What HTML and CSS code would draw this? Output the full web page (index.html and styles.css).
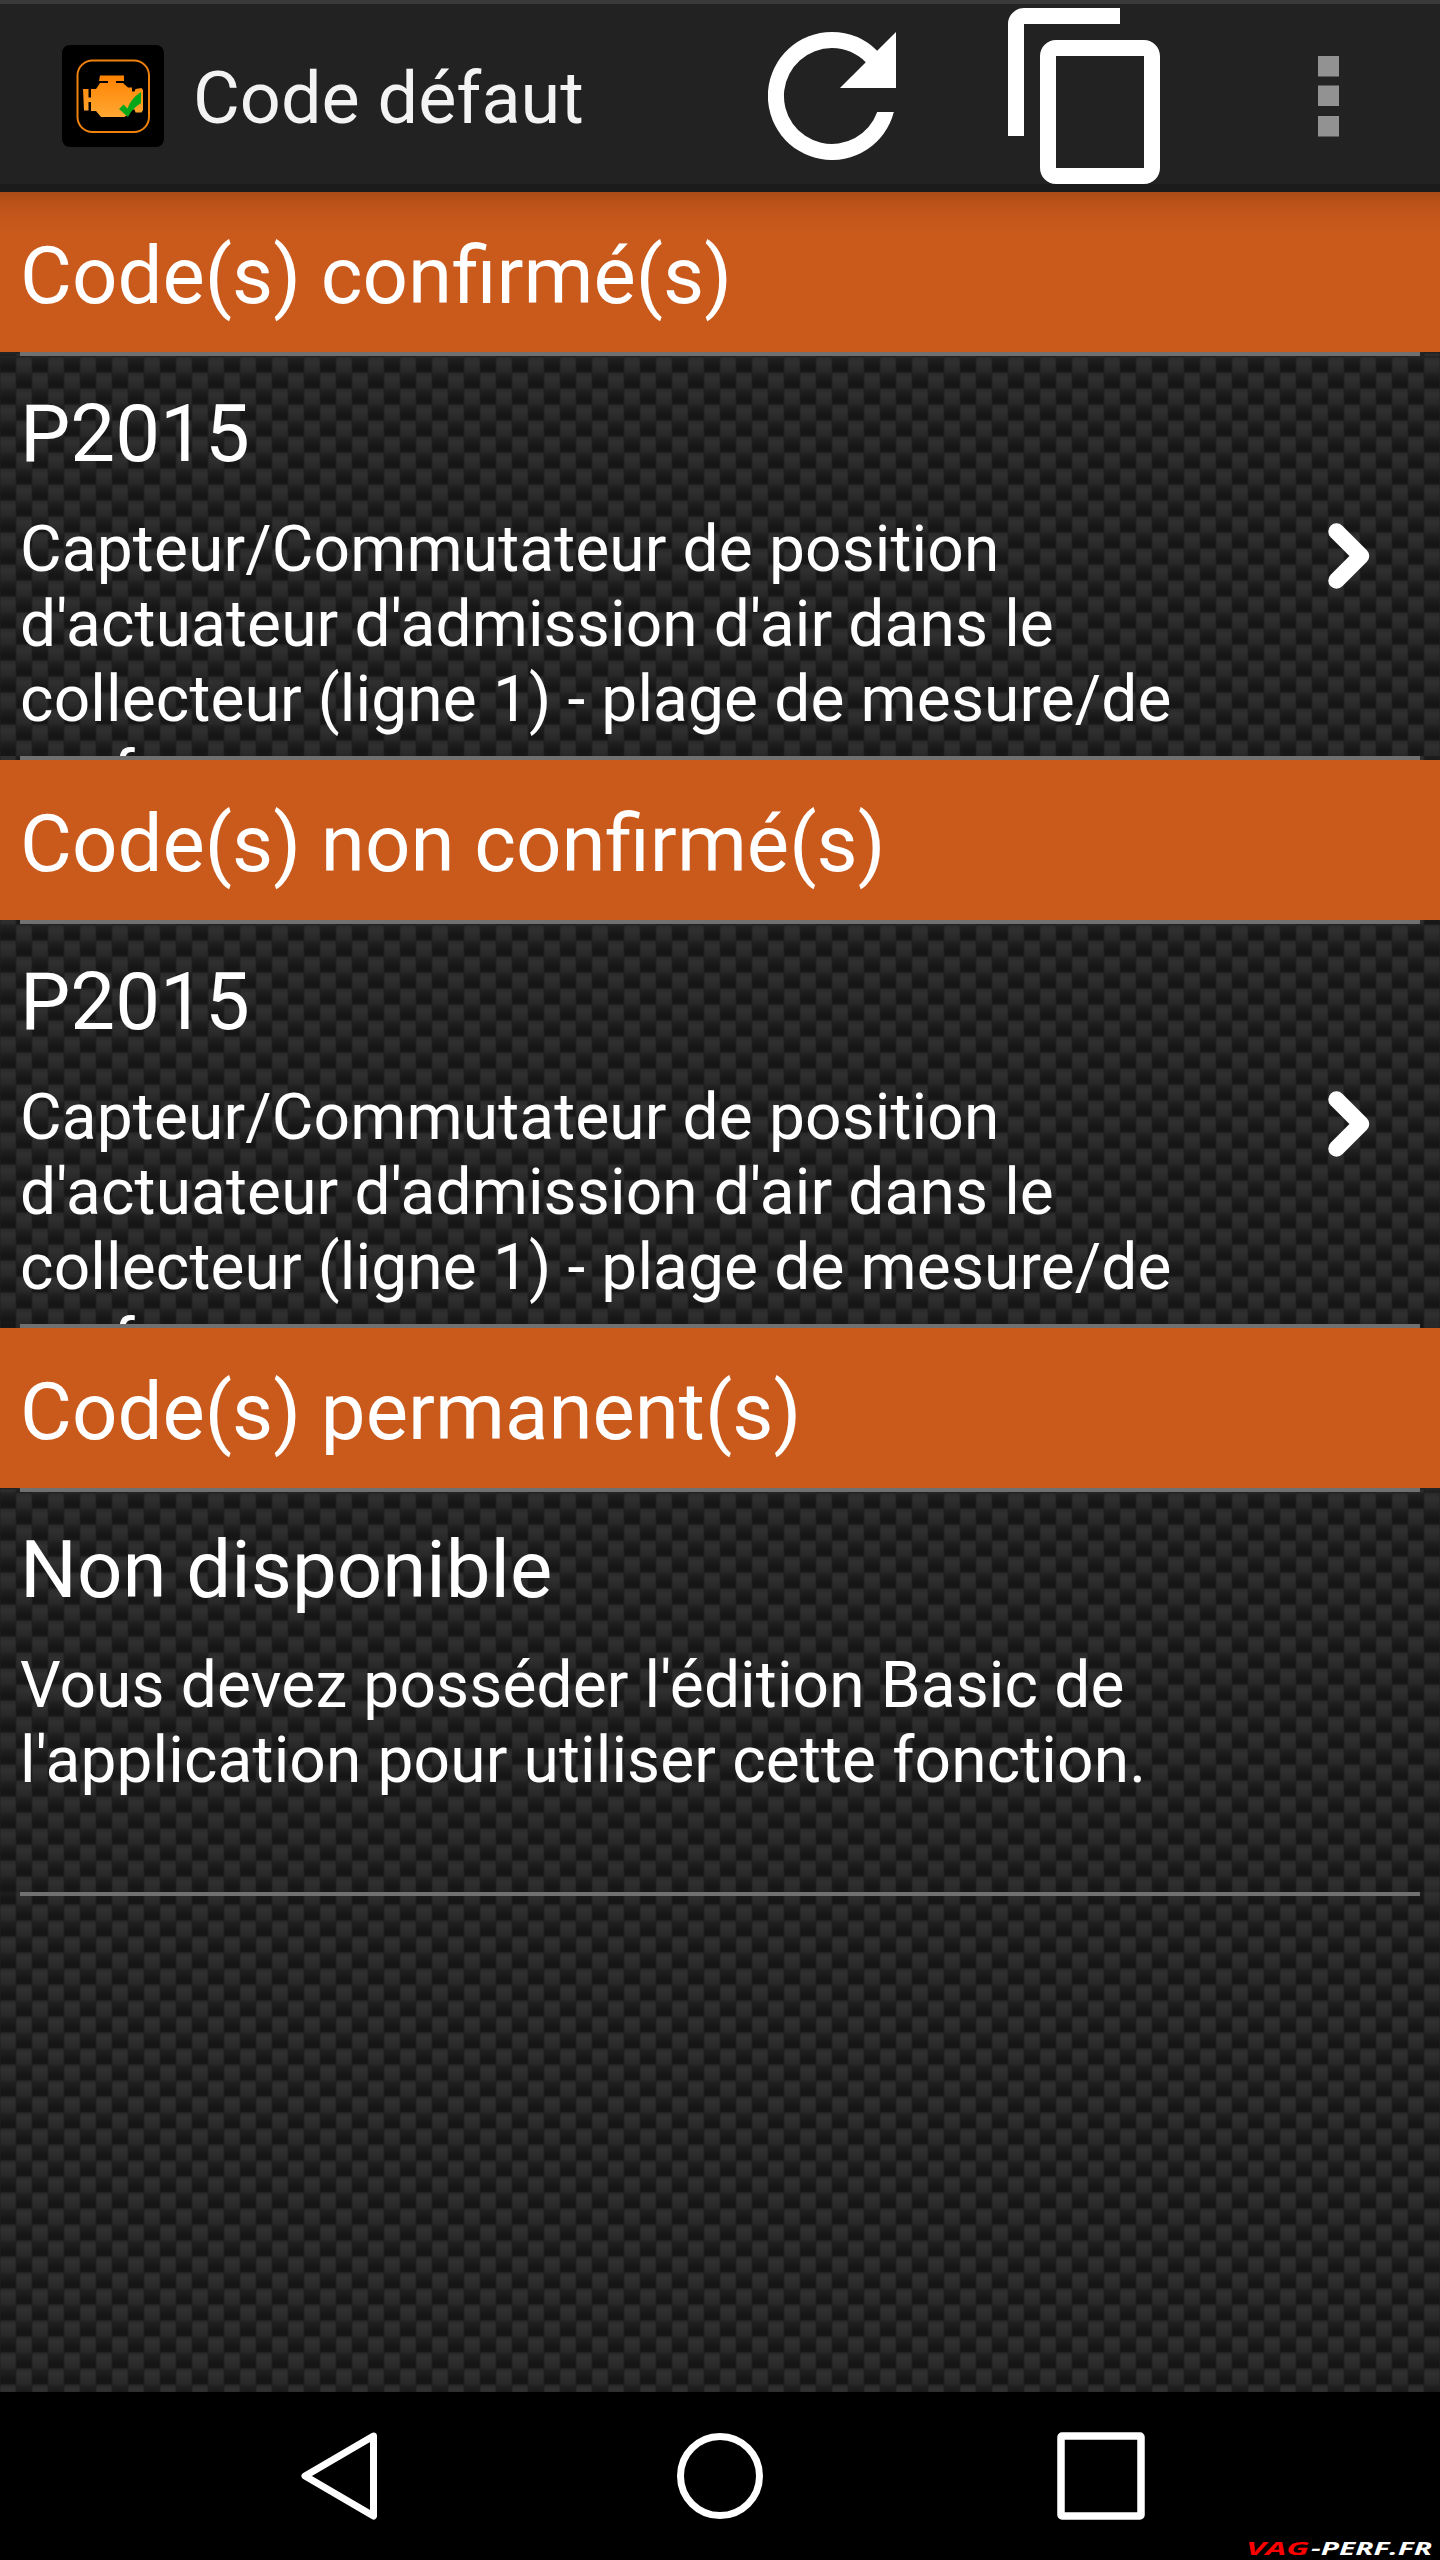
FILE: index.html
```html
<!DOCTYPE html>
<html lang="fr">
<head>
<meta charset="utf-8">
<title>Code défaut</title>
<link rel="stylesheet" href="styles.css">
</head>
<body>
<div class="screen">
  <header class="bar">
    <svg class="app-icon" viewBox="0 0 104 104" width="104" height="104">
      <defs><linearGradient id="amber" x1="0" y1="0" x2="0" y2="1"><stop offset="0" stop-color="#ff8200"/><stop offset="1" stop-color="#ffa833"/></linearGradient></defs>
      <rect x="1" y="1" width="102" height="102" rx="8" fill="#000"/>
      <rect x="16.500" y="16.500" width="71.500" height="71.500" rx="15" fill="none" stroke="#f0820c" stroke-width="2"/>
      <path fill="url(#amber)" d="M39 31.500h24v5.500h-8v2h7l5 4.500h4v4h2.500l1-2.500 6-1 1.500 2v20l-1.500 2.500h-6l-1-3h-3.500l-1.500 4-5 3.500H40L35 67h-5v-9h-2.500v8.500H23L22 45h5.500v8.500H30V45h5l4-6h8v-2h-9z"/>
      <path fill="#06a81a" d="M58 65l4.500-4.500 4 4c3-8 7-12 13.500-16.500V59c-6 4-10 8-13 14z"/>
    </svg>
    <h1 class="title">Code défaut</h1>
    <div class="actions">
      <svg class="action refresh" viewBox="4 4 16 16" width="128" height="128"><path fill="#fff" d="M17.650 6.350A7.960 7.960 0 0 0 12 4a8 8 0 1 0 7.730 10h-2.080A6 6 0 1 1 12 6c1.660 0 3.140.69 4.220 1.780L13 11h7V4z"/></svg>
      <svg class="action copy" viewBox="2 1 19 22" width="152" height="176"><path fill="#fff" d="M16 1H4c-1.100 0-2 .9-2 2v14h2V3h12V1zm3 4H8c-1.100 0-2 .9-2 2v14c0 1.100.9 2 2 2h11c1.100 0 2-.9 2-2V7c0-1.100-.9-2-2-2zm0 16H8V7h11v14z"/></svg>
      <svg class="action more" viewBox="0 0 21 81" width="21" height="81"><path fill="#929292" d="M0 0h21v20.500H0zM0 29.500h21V50H0zM0 60h21v20.500H0z"/></svg>
    </div>
  </header>
  <main class="list">
    <h2 class="section first">Code(s) confirmé(s)</h2>
    <div class="rule"></div>
    <article class="item">
      <div class="copyblock">
        <h3>P2015</h3>
        <p>Capteur/Commutateur de position d'actuateur d'admission d'air dans le collecteur (ligne 1) - plage de mesure/de performance</p>
      </div>
      <svg class="chevron" viewBox="0 0 42 66" width="42" height="66"><path d="M8.500 8.500L33 33 8.500 57.500" fill="none" stroke="#fff" stroke-width="16.500" stroke-linecap="round" stroke-linejoin="round"/></svg>
    </article>
    <div class="rule"></div>
    <h2 class="section">Code(s) non confirmé(s)</h2>
    <div class="rule"></div>
    <article class="item">
      <div class="copyblock">
        <h3>P2015</h3>
        <p>Capteur/Commutateur de position d'actuateur d'admission d'air dans le collecteur (ligne 1) - plage de mesure/de performance</p>
      </div>
      <svg class="chevron" viewBox="0 0 42 66" width="42" height="66"><path d="M8.500 8.500L33 33 8.500 57.500" fill="none" stroke="#fff" stroke-width="16.500" stroke-linecap="round" stroke-linejoin="round"/></svg>
    </article>
    <div class="rule"></div>
    <h2 class="section">Code(s) permanent(s)</h2>
    <div class="rule"></div>
    <article class="item">
      <div class="copyblock">
        <h3>Non disponible</h3>
        <p>Vous devez posséder l'édition Basic de l'application pour utiliser cette fonction.</p>
      </div>
    </article>
    <div class="rule"></div>
  </main>
  <nav class="nav">
    <svg class="back" viewBox="0 0 88 88" width="88" height="88"><path d="M73.500 4L5 44 73.500 84z" fill="none" stroke="#fff" stroke-width="7" stroke-linejoin="round"/></svg>
    <svg class="home" viewBox="0 0 88 88" width="88" height="88"><circle cx="44" cy="44" r="39.500" fill="none" stroke="#fff" stroke-width="7"/></svg>
    <svg class="recent" viewBox="0 0 88 88" width="88" height="88"><rect x="4" y="4" width="80" height="80" rx="1" fill="none" stroke="#fff" stroke-width="7.500"/></svg>
    <svg class="watermark" viewBox="0 0 190 18" width="190" height="18"><g font-family="Open Sans, sans-serif" font-weight="700" font-style="italic" font-size="17"><text x="1" y="16" fill="#f00" textLength="63" lengthAdjust="spacingAndGlyphs">VAG</text><text x="66" y="16" fill="#fff" textLength="121" lengthAdjust="spacingAndGlyphs">-PERF.FR</text></g></svg>
  </nav>
</div>
</body>
</html>
```
FILE: styles.css
```css
* { box-sizing: border-box; margin: 0; padding: 0; }
body { font-family: Roboto, sans-serif; background: #000; color: #fff; }
h1, h2, h3 { font-weight: 400; }
svg { display: block; flex: none; }

.screen {
  width: 1440px;
  height: 2560px;
  display: flex;
  flex-direction: column;
  overflow: hidden;
}

/* Carbon-fibre weave: vertical strands, every other one shifted by half a period */
.screen, .item {
  background-color: #1f1f1f;
  background-image: url("data:image/svg+xml,%3Csvg xmlns='http://www.w3.org/2000/svg' width='32' height='32'%3E%3Cdefs%3E%3ClinearGradient id='g' x1='0' y1='0' x2='0' y2='1'%3E%3Cstop offset='0' stop-color='%231e1e1e'/%3E%3Cstop offset='.07' stop-color='%232c2c2c'/%3E%3Cstop offset='.2' stop-color='%23303030'/%3E%3Cstop offset='.48' stop-color='%23282828'/%3E%3Cstop offset='.6' stop-color='%231f1f1f'/%3E%3Cstop offset='.88' stop-color='%23151515'/%3E%3Cstop offset='1' stop-color='%23171717'/%3E%3C/linearGradient%3E%3C/defs%3E%3Cg fill='url(%23g)'%3E%3Crect y='-16' width='16' height='32'/%3E%3Crect y='16' width='16' height='32'/%3E%3Crect x='16' width='16' height='32'/%3E%3C/g%3E%3Cpath d='M0 0v32M16 0v32M32 0v32' stroke='%23202020' stroke-opacity='.5' stroke-width='2'/%3E%3C/svg%3E");
  background-size: 32px 32px;
}

.bar {
  height: 192px;
  flex: none;
  display: flex;
  align-items: center;
  padding: 4px 101px 0 61px;
  background: #222;
  border-top: 4px solid #3a3a3a;
  border-bottom: 8px solid #1b1b1b;
}
.title { margin-left: 28px; font-size: 72px; color: #f3f3f3; line-height: 84px; padding-top: 6px; }
.actions { margin-left: auto; display: flex; align-items: center; }
.copy { margin-left: 112px; }
.more { margin-left: 158px; }

.list { flex: 1; }
.section { height: 160px; padding: 0 20px; font-size: 79.8px; line-height: 168px; background: #ca5a1c; }
.first { background: linear-gradient(#a94b17, #ba5219 10px, #c5571b 28px, #ca5a1c 44px); }
.rule { height: 4px; margin: 0 20px; background: #707070; }
.item { height: 400px; display: flex; overflow: hidden; padding: 0 70px 0 20px; justify-content: space-between; }
.copyblock { width: 1200px; }
.item h3 { font-size: 79.8px; line-height: 94px; padding-top: 31px; }
.item p { font-size: 64px; line-height: 75px; padding-top: 31px; letter-spacing: .14px; }
.chevron { margin-top: 167px; }

.nav {
  position: relative;
  height: 168px;
  flex: none;
  background: #000;
  display: flex;
  align-items: center;
  padding-left: 300px;
}
.home { margin-left: 288px; }
.recent { margin-left: 293px; }
.watermark { position: absolute; right: 5px; bottom: 3px; }
```
